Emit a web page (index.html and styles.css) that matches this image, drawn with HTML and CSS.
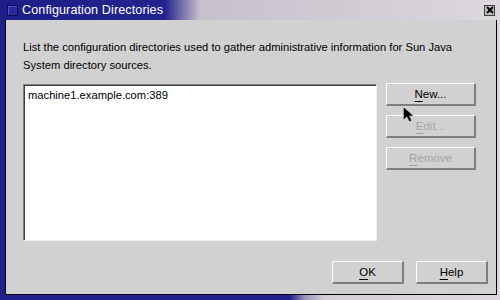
FILE: index.html
```html
<!DOCTYPE html>
<html lang="en">
<head>
    <meta charset="UTF-8">
    <title>Configuration Directories</title>
    <link rel="stylesheet" href="styles.css">
</head>
<body>

    <div class="window">
        <!-- Title bar -->
        <div class="titlebar">
            <span class="win-icon"></span>
            <span class="title">Configuration Directories</span>
            <span class="close">
                <svg width="8" height="8" viewBox="0 0 8 8"><path d="M1 1 L7 7 M7 1 L1 7" stroke="#000" stroke-width="2"/></svg>
            </span>
        </div>

        <!-- Dialog body -->
        <div class="dialog">
            <p class="intro">List the configuration directories used to gather administrative information for Sun Java System directory sources.</p>

            <div class="main">
                <div class="list">
                    <div class="list-item">machine1.example.com:389</div>
                </div>
                <div class="actions">
                    <button class="btn"><u>N</u>ew...</button>
                    <button class="btn" disabled><u>E</u>dit...</button>
                    <button class="btn" disabled><u>R</u>emove</button>
                </div>
            </div>

            <div class="footer">
                <button class="btn btn-small"><u>O</u>K</button>
                <button class="btn btn-small"><u>H</u>elp</button>
            </div>
        </div>

        <!-- mouse pointer -->
        <svg class="pointer" width="12" height="16" viewBox="0 0 12 16">
            <path d="M1 1 L1 12 L4 9 L6.5 14 L8 13.3 L5.6 8.6 L9.5 8.6 Z" fill="#000" stroke="#000" stroke-width="0.6"/>
        </svg>
    </div>

</body>
</html>
```

FILE: styles.css
```css
/* Page */
body {
    margin: 0;
    width: 500px;
    height: 300px;
    overflow: hidden;
    font-family: "Liberation Sans", Arial, sans-serif;
    background: #1e1e88;
}

/* Window frame */
.window {
    position: relative;
    display: flex;
    flex-direction: column;
    width: 500px;
    height: 300px;
    box-sizing: border-box;
    padding: 0 3px 5px 5px;
    background: linear-gradient(90deg, #20208c 0%, #20208c 58%, #9a96bc 61%, #d4cfd6 65%, #dcd8de 100%);
}

.titlebar {
    display: flex;
    align-items: center;
    height: 20px;
    margin: 0 -3px 0 -5px;
    padding: 0 5px 0 7px;
    background: linear-gradient(90deg, #1e1e8a 0%, #23238e 33%, #6c68a8 36%, #c6c0ca 40%, #dcd8de 100%);
}

.win-icon {
    width: 9px;
    height: 9px;
    border: 1px solid #0c0c50;
    background: #2a2aa0;
    box-shadow: inset 1px 1px 0 #5656c0;
}

.title {
    margin-left: 4px;
    color: #fff;
    font-size: 12.6px;
    letter-spacing: 0.1px;
}

.close {
    display: flex;
    align-items: center;
    justify-content: center;
    margin-left: auto;
    width: 9px;
    height: 9px;
    border: 1px solid #404040;
    background: #bdbdbd;
}

/* Dialog */
.dialog {
    flex: 1;
    padding: 18px 0 0 17px;
    background: #d1d1d1;
    border: 1px solid #000;
    border-top: 0;
}

.intro {
    width: 432px;
    margin: 0 0 10px;
    font-size: 11.2px;
    line-height: 18px;
    color: #000;
}

.main {
    display: flex;
    gap: 9px;
}

.list {
    width: 354px;
    height: 157px;
    box-sizing: border-box;
    background: #fff;
    border-top: 1px solid #808080;
    border-left: 1px solid #808080;
    border-right: 1px solid #f0f0f0;
    border-bottom: 1px solid #f0f0f0;
    box-shadow: inset 1px 1px 0 #404040;
}

.list-item {
    padding: 4px 0 0 4px;
    font-size: 11.2px;
    color: #000;
}

.actions {
    display: flex;
    flex-direction: column;
    gap: 9px;
    width: 90px;
    margin-top: -1px;
}

/* Buttons */
.btn {
    height: 23px;
    padding: 0;
    box-sizing: border-box;
    font-family: "Liberation Sans", Arial, sans-serif;
    font-size: 11.5px;
    color: #000;
    background: #d1d1d1;
    border-top: 1px solid #fff;
    border-left: 1px solid #fff;
    border-right: 2px solid #7e7e7e;
    border-bottom: 2px solid #7e7e7e;
    border-radius: 0;
}

.btn u {
    text-underline-offset: 3px;
}

.btn:disabled {
    color: #a4a4a4;
}

.footer {
    display: flex;
    justify-content: flex-end;
    gap: 12px;
    margin-top: 20px;
    padding-right: 8px;
}

.btn-small {
    width: 72px;
}

.pointer {
    position: absolute;
    left: 403px;
    top: 107px;
}
```
